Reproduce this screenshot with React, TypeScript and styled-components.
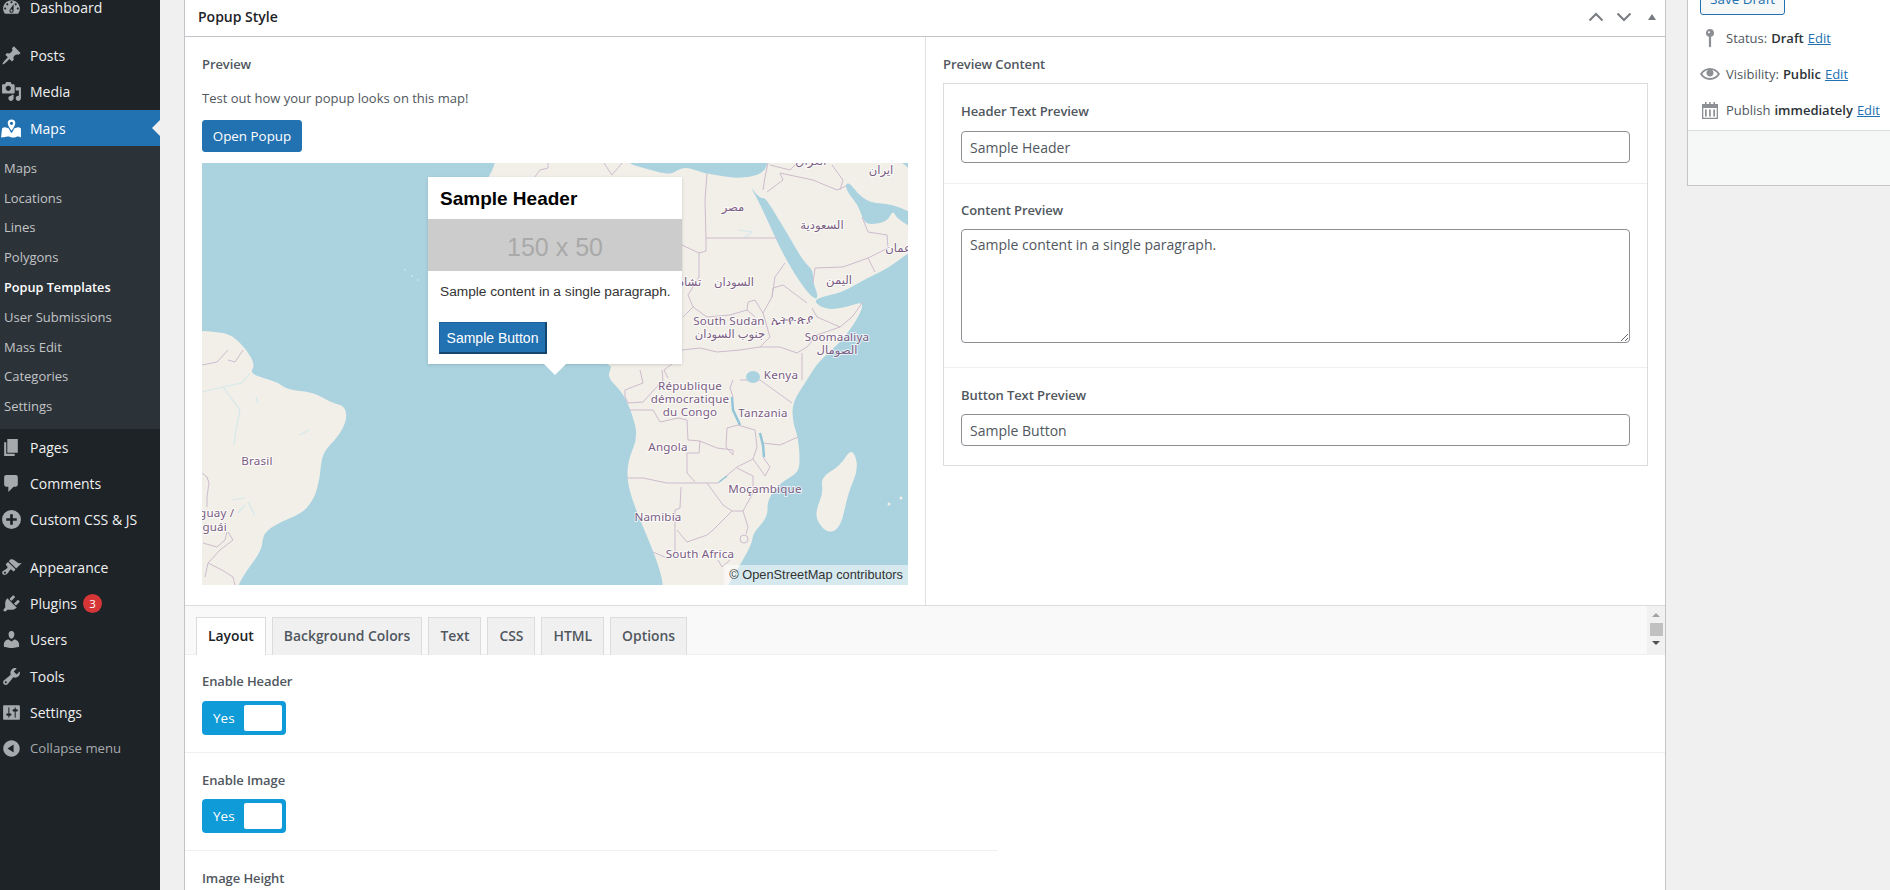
import React from 'react';
import styled, { createGlobalStyle } from 'styled-components';

const GlobalStyle = createGlobalStyle`
  html, body { margin: 0; padding: 0; background: #f0f0f1; overflow: hidden; }
  * { box-sizing: border-box; }
  body { font-family: "Open Sans", "Noto Sans", sans-serif; font-size: 14px; color: #50575e; }
`;

const ICONS: Record<string, string> = {
  dashboard:
    'M3.76 16h12.48c1.1-1.37 1.76-3.11 1.76-5 0-4.42-3.58-8-8-8s-8 3.58-8 8c0 1.89.66 3.63 1.76 5zM10 4c.55 0 1 .45 1 1s-.45 1-1 1-1-.45-1-1 .45-1 1-1zM6 6c.55 0 1 .45 1 1s-.45 1-1 1-1-.45-1-1 .45-1 1-1zm8 0c.55 0 1 .45 1 1s-.45 1-1 1-1-.45-1-1 .45-1 1-1zm-5.37 5.55L12 7v6c0 1.1-.9 2-2 2s-2-.9-2-2c0-.57.24-1.08.63-1.45zM4 10c.55 0 1 .45 1 1s-.45 1-1 1-1-.45-1-1 .45-1 1-1zm12 0c.55 0 1 .45 1 1s-.45 1-1 1-1-.45-1-1 .45-1 1-1zm-5 3c0-.55-.45-1-1-1s-1 .45-1 1 .45 1 1 1 1-.45 1-1z',
  post: 'M10.44 3.02l1.82-1.82 6.36 6.35-1.83 1.82c-1.05-.68-2.48-.57-3.41.36l-.75.75c-.92.93-1.04 2.35-.35 3.41l-1.83 1.82-2.41-2.41-2.8 2.79c-.42.42-3.38 2.71-3.8 2.29s1.86-3.39 2.28-3.81l2.79-2.79L4.1 9.36l1.83-1.82c1.05.69 2.48.57 3.4-.36l.75-.75c.93-.92 1.05-2.35.36-3.41z',
  media:
    'M13 11V4c0-.55-.45-1-1-1h-1.67L9 1H5L3.67 3H2c-.55 0-1 .45-1 1v7c0 .55.45 1 1 1h10c.55 0 1-.45 1-1zM7 4.5c1.38 0 2.5 1.12 2.5 2.5S8.38 9.5 7 9.5 4.5 8.38 4.5 7 5.62 4.5 7 4.5zM14 6h5v10.5c0 1.38-1.12 2.5-2.5 2.5S14 17.88 14 16.5s1.12-2.5 2.5-2.5c.17 0 .34.02.5.05V9h-3V6zm-4 8.05V13h2v3.5c0 1.38-1.12 2.5-2.5 2.5S7 17.88 7 16.5 8.12 14 9.5 14c.17 0 .34.02.5.05z',
  maps: 'M1 10c1.5-1.2 3-1.4 4.6-.6L7.5 10c.4 1.3 1.2 2.8 2.5 4.4 1.3-1.6 2.1-3.1 2.5-4.4l1.9-.6c1.6-.8 3.1-.6 4.6.6v8.5c-1.5-1-3-1.2-4.6-.5-1.7.7-3.5.8-5.4.1-1.9-.7-3.7-.6-5.4.1-.8.3-2.3.3-3.6.3zM10 1.5a3.6 3.6 0 0 1 3.6 3.6c0 1.8-1.7 4.7-3.6 7-1.9-2.3-3.6-5.2-3.6-7A3.6 3.6 0 0 1 10 1.5zm0 2.1a1.5 1.5 0 1 0 0 3 1.5 1.5 0 0 0 0-3z',
  page: 'M6 15V2h10v13H6zm-1 1h8v2H3V5h2v11z',
  comment: 'M5 2h9c1.1 0 2 .9 2 2v7c0 1.1-.9 2-2 2h-2l-5 5v-5H5c-1.1 0-2-.9-2-2V4c0-1.1.9-2 2-2z',
  plus: 'M10 1a9 9 0 1 0 0 18 9 9 0 0 0 0-18zm-1.3 4h2.6v3.7H15v2.6h-3.7V15H8.7v-3.7H5V8.7h3.7z',
  appearance:
    'M14.48 11.06L7.41 3.99l1.5-1.5c.5-.56 2.3-.47 3.51.32 1.21.8 1.43 1.28 2.91 2.1 1.18.64 2.45 1.26 4.45.85zm-.71.71L6.7 4.7 4.93 6.47c-.39.39-.39 1.02 0 1.41l1.06 1.06c.39.39.39 1.03 0 1.42-.6.6-1.43 1.11-2.21 1.69-.35.26-.7.53-1.01.84C1.43 13.23.4 14.97 1.8 16.37c1.4 1.41 3.15.38 4.49-.95.31-.31.58-.66.84-1.01.58-.78 1.09-1.61 1.69-2.21.39-.39 1.03-.39 1.42 0l1.06 1.06c.39.39 1.02.39 1.41 0zM3.06 15.77c-.39-.39-.39-1.02 0-1.41s1.02-.39 1.41 0 .39 1.02 0 1.41-1.02.39-1.41 0z',
  plugin:
    'M13.11 4.36L9.87 7.6 8 5.73l3.24-3.24c.35-.34 1.05-.2 1.56.32.52.51.66 1.21.31 1.55zm-8 1.77l.91-1.12 9.01 9.01-1.19.84c-.71.71-2.63 1.16-3.82 1.16H6.14L4.9 17.26c-.59.59-1.54.59-2.12 0-.59-.58-.59-1.53 0-2.12l1.24-1.24v-3.88c0-1.13.4-3.19 1.09-3.89zm7.26 3.97l3.24-3.24c.34-.35 1.04-.21 1.55.31.52.51.66 1.21.31 1.55l-3.24 3.25z',
  users:
    'M10 9.25c-2.27 0-2.73-3.44-2.73-3.44C7 4.02 7.82 2 9.97 2c2.16 0 2.98 2.02 2.71 3.81 0 0-.41 3.44-2.68 3.44zm0 2.57L12.72 10c2.39 0 4.52 2.33 4.52 4.53v2.49s-3.65 1.13-7.24 1.13c-3.65 0-7.24-1.13-7.24-1.13v-2.49c0-2.25 1.94-4.48 4.47-4.48z',
  tools:
    'M16.68 9.77c-1.34 1.34-3.3 1.67-4.95.99l-5.41 6.52c-.99.99-2.59.99-3.58 0s-.99-2.59 0-3.57l6.52-5.42c-.68-1.65-.35-3.61.99-4.95 1.28-1.28 3.12-1.62 4.72-1.06l-2.89 2.89 2.82 2.82 2.86-2.87c.53 1.58.18 3.39-1.08 4.65zM3.81 16.21c.4.39 1.04.39 1.43 0 .4-.4.4-1.04 0-1.43-.39-.4-1.03-.4-1.43 0-.39.39-.39 1.03 0 1.43z',
  settings:
    'M18 16V4c0-.55-.45-1-1-1H3c-.55 0-1 .45-1 1v12c0 .55.45 1 1 1h14c.55 0 1-.45 1-1zM8 11h1c.55 0 1 .45 1 1s-.45 1-1 1H8v1.5c0 .28-.22.5-.5.5s-.5-.22-.5-.5V13H6c-.55 0-1-.45-1-1s.45-1 1-1h1V5.5c0-.28.22-.5.5-.5s.5.22.5.5V11zm5-2h-1c-.55 0-1-.45-1-1s.45-1 1-1h1V5.5c0-.28.22-.5.5-.5s.5.22.5.5V7h1c.55 0 1 .45 1 1s-.45 1-1 1h-1v5.5c0 .28-.22.5-.5.5s-.5-.22-.5-.5V9z',
  collapse: 'M10 2.16c4.33 0 7.84 3.51 7.84 7.84s-3.51 7.84-7.84 7.84S2.16 14.33 2.16 10 5.71 2.16 10 2.16zm2 11.72V6.12L6.18 9.97z',
  pin: 'M10 1a4 4 0 0 1 1.1 7.85v9.65L10 19.5l-1.1-1V8.85A4 4 0 0 1 10 1zM9 3.2a1 1 0 1 0 0 2 1 1 0 0 0 0-2z',
  eye: 'M19.7 9.4C17.7 6 14 3.9 10 3.9S2.3 6 .3 9.4L0 10l.3.6c2 3.4 5.7 5.5 9.7 5.5s7.7-2.1 9.7-5.5l.3-.6-.3-.6zM10 14.1c-3.1 0-6-1.6-7.7-4.1C3.6 8 5.7 6.6 8 6.1c-.9.6-1.5 1.7-1.5 2.9 0 1.9 1.6 3.5 3.5 3.5s3.5-1.6 3.5-3.5c0-1.2-.6-2.3-1.5-2.9 2.3.5 4.4 1.9 5.7 3.9-1.7 2.5-4.6 4.1-7.7 4.1z',
  calendar:
    'M2 4h3V2h1.5v2h2.7V2h1.5v2h2.8V2H15v2h3v15H2zm1.3 4v9.7h13.4V8zM5 9.5h1.7v7H5zm4.1 0h1.7v7H9.1zm4.2 0H15v7h-1.7z',
};

const menuTop = [
  { icon: 'post', label: 'Posts' },
  { icon: 'media', label: 'Media' },
];
const subItems = ['Maps', 'Locations', 'Lines', 'Polygons', 'Popup Templates', 'User Submissions', 'Mass Edit', 'Categories', 'Settings'];
const menuMid = [
  { icon: 'page', label: 'Pages' },
  { icon: 'comment', label: 'Comments' },
  { icon: 'plus', label: 'Custom CSS & JS' },
];
const menuLow = [
  { icon: 'appearance', label: 'Appearance' },
  { icon: 'plugin', label: 'Plugins', badge: '3' },
  { icon: 'users', label: 'Users' },
  { icon: 'tools', label: 'Tools', offset: 1 },
  { icon: 'settings', label: 'Settings' },
];
const tabs = ['Layout', 'Background Colors', 'Text', 'CSS', 'HTML', 'Options'];

const Icon: React.FC<{ name: string; size?: number; className?: string }> = ({ name, size = 21, className }) => (
  <svg className={className} width={size} height={size} viewBox="0 0 20 20" fill="currentColor" fillRule="evenodd">
    <path d={ICONS[name]} />
  </svg>
);

// rounds a coast given as "x y x y ..." through the midpoints of its segments
const smooth = (points: string) => {
  const n = points.trim().split(/\s+/).map(Number);
  const pts: [number, number][] = [];
  for (let i = 0; i < n.length; i += 2) pts.push([n[i], n[i + 1]]);
  const mid = (a: [number, number], b: [number, number]) => `${(a[0] + b[0]) / 2} ${(a[1] + b[1]) / 2}`;
  let d = `M${mid(pts[pts.length - 1], pts[0])}`;
  pts.forEach((p, i) => {
    d += `Q${p[0]} ${p[1]} ${mid(p, pts[(i + 1) % pts.length])}`;
  });
  return d + 'Z';
};

// land and sea shapes, in page coordinates
const AFRICA = smooth(
  '497 150 627 150 627 163 643 168 670 175 677 170 687 167 703 173 717 175 733 178 750 177 763 173 768 163 768 150 920 150 920 248 908 253 890 267 870 277 860 282 843 292 817 298 815 303 827 310 847 307 865 301 857 320 840 343 818 362 807 380 792 403 793 423 798 437 800 460 798 473 780 483 767 500 768 517 753 533 752 543 743 560 725 590 725 600 663 600 663 585 660 570 650 543 637 513 627 483 628 460 638 437 632 413 623 393 608 378 610 370 612 365 560 345 470 300 430 250 492 177'
);
const RED_SEA = smooth(
  '750 186 758 200 771 228 781 250 794 273 807 292 816 300 818 295 813 283 813 270 804 262 791 240 781 223 765 197 762 199 756 194'
);
const GULF = smooth('845 184 850 183 857 193 870 203 893 204 920 217 920 232 897 219 893 210 887 222 867 225 862 217 858 205 848 193');
const MADAGASCAR = smooth('852 447 859 468 848 493 841 527 828 534 816 520 817 507 823 493 821 477 840 466');
const BRAZIL = smooth(
  '190 330 218 332 232 335 247 350 255 365 250 373 263 378 277 382 288 390 313 392 332 403 345 406 347 420 338 437 322 453 320 477 315 497 303 513 280 522 263 533 262 550 247 570 237 587 237 600 190 600'
);

const BORDERS = [
  '707 173 705 200 706 238 777 238',
  '682 245 699 253 706 251 706 238',
  '699 253 699 277 688 295 693 307 683 317',
  '693 307 707 317 730 315 747 310 755 317',
  '785 263 775 277 772 297 763 313 755 300 748 302 747 310',
  '682 350 700 348 717 352 740 350 760 347 770 337 763 313',
  '760 347 780 347 797 353 807 347 817 335 840 327',
  '802 353 802 380',
  '812 308 817 317 840 327 852 317 863 302',
  '807 303 783 285 773 288 772 297',
  '815 268 843 267 868 258 888 248 887 235 868 232 862 217',
  '815 268 813 283',
  '868 258 875 272',
  '768 163 765 177 763 190',
  '780 173 813 180 837 190 846 186',
  '780 173 783 180 767 192',
  '770 165 790 170 797 163',
  '832 165 843 180 840 190',
  '534 178 540 170 548 168 548 163',
  '604 163 612 175 622 163',
  '640 370 643 383 625 390 625 397 628 403 643 402 663 380 662 370',
  '672 364 664 370 668 378',
  '740 380 760 380 792 403',
  '733 380 730 388 733 397',
  '630 410 653 410 660 422 678 418 687 420 688 440 700 441 699 453 687 453 687 473 695 482',
  '700 441 717 448 733 450 733 455 726 447 727 428 738 425 755 430 757 447 753 459 737 467 718 483',
  '763 443 780 445 798 437',
  '627 478 643 478 667 483 697 483 718 483',
  '681 487 680 508 675 510 675 553',
  '707 483 723 505 732 511 713 530 707 535 687 542 677 530',
  '737 468 753 476 753 493 743 511 732 511',
  '743 511 748 527 746 534',
  '653 552 667 558',
  '763 457 770 467 765 476 761 470 753 459',
  '718 560 722 567 730 560',
  '202 473 207 477 209 483 207 497 207 507',
  '203 543 217 547 225 540 227 532',
  '228 532 233 540 220 550 208 563 205 577',
  '208 563 222 570 233 577 235 585',
  '202 365 217 362 228 350',
  '228 360 235 362 243 350',
];
const RIVERS = [
  '202 392 223 387 242 383 250 373',
  '223 387 240 410 236 430 234 445',
  '256 397 258 403',
  '300 435 309 430',
  '245 505 238 513',
  '248 502 255 515',
  '738 230 752 232 744 238',
  '232 500 245 498',
];
const LABELS: [number, number, string][] = [
  [811, 165, 'العراق'],
  [881, 174, 'ايران'],
  [733, 211, 'مصر'],
  [822, 229, 'السعودية'],
  [898, 252, 'عمان'],
  [734, 286, 'السودان'],
  [690, 286, 'تشاد'],
  [839, 284, 'اليمن'],
  [729, 325, 'South Sudan'],
  [730, 338, 'جنوب السودان'],
  [792, 324, 'ኢትዮጵያ'],
  [837, 341, 'Soomaaliya'],
  [837, 354, 'الصومال'],
  [781, 379, 'Kenya'],
  [690, 390, 'République'],
  [690, 403, 'démocratique'],
  [690, 416, 'du Congo'],
  [763, 417, 'Tanzania'],
  [668, 451, 'Angola'],
  [765, 493, 'Moçambique'],
  [658, 521, 'Namibia'],
  [700, 558, 'South Africa'],
  [257, 465, 'Brasil'],
  [204, 517, 'Paraguay /'],
  [202, 531, 'Paraguái'],
];

const MapDrawing: React.FC = () => (
  <MapSvg viewBox="202 163 706 422" width={706} height={422}>
    <rect x="202" y="163" width="706" height="422" fill="#aad3df" />
    <path d={AFRICA} fill="#f2efe9" />
    <path d={BRAZIL} fill="#f2efe9" />
    <path d={MADAGASCAR} fill="#f2efe9" />
    <path d={RED_SEA} fill="#aad3df" />
    <path d={GULF} fill="#aad3df" />
    {RIVERS.map((r) => (
      <polyline key={r} points={r} fill="none" stroke="#d5e8ea" strokeWidth="1.2" />
    ))}
    {BORDERS.map((b) => (
      <polyline key={b} points={b} fill="none" stroke="#cdbccd" strokeWidth="1" />
    ))}
    <ellipse cx="753" cy="377" rx="7" ry="6" fill="#aad3df" />
    <polyline points="732 397 733 410 740 425" fill="none" stroke="#93c5d8" strokeWidth="2.5" />
    <polyline points="760 433 763 445 764 457" fill="none" stroke="#93c5d8" strokeWidth="2.5" />
    <polyline points="719 482 727 476" fill="none" stroke="#93c5d8" strokeWidth="1.5" />
    <circle cx="744" cy="539" r="4" fill="none" stroke="#cdbccd" />
    <circle cx="889" cy="504" r="1.5" fill="#f2efe9" />
    <circle cx="901" cy="498" r="1.5" fill="#f2efe9" />
    <circle cx="405" cy="270" r="0.8" fill="#e4eef0" />
    <circle cx="412" cy="276" r="0.8" fill="#e4eef0" />
    <circle cx="418" cy="280" r="0.8" fill="#e4eef0" />
    {LABELS.map(([x, y, t]) => (
      <MapLabel key={t} x={x} y={y} textAnchor="middle">
        {t}
      </MapLabel>
    ))}
  </MapSvg>
);

const App: React.FC = () => (
  <Page>
    <GlobalStyle />
    <Sidebar>
      <MenuItem $offset={-11}>
        <MenuIcon name="dashboard" />
        Dashboard
      </MenuItem>
      <Separator />
      {menuTop.map((m) => (
        <MenuItem key={m.label}>
          <MenuIcon name={m.icon} />
          {m.label}
        </MenuItem>
      ))}
      <ActiveItem $offset={1}>
        <MenuIcon name="maps" />
        Maps
        <ActiveArrow />
      </ActiveItem>
      <SubMenu>
        {subItems.map((s) => (
          <SubItem key={s} $current={s === 'Popup Templates'}>
            {s}
          </SubItem>
        ))}
      </SubMenu>
      {menuMid.map((m) => (
        <MenuItem key={m.label}>
          <MenuIcon name={m.icon} />
          {m.label}
        </MenuItem>
      ))}
      <Separator />
      {menuLow.map((m) => (
        <MenuItem key={m.label} $offset={m.offset}>
          <MenuIcon name={m.icon} />
          {m.label}
          {m.badge && <Badge>{m.badge}</Badge>}
        </MenuItem>
      ))}
      <CollapseItem>
        <MenuIcon name="collapse" />
        Collapse menu
      </CollapseItem>
    </Sidebar>

    <Panel>
      <PanelHeader>
        <PanelTitle>Popup Style</PanelTitle>
        <HeaderActions>
          <svg width="16" height="10" viewBox="0 0 16 10" fill="none" stroke="#787c82" strokeWidth="2">
            <path d="M1.5 8.5L8 2l6.5 6.5" />
          </svg>
          <svg width="16" height="10" viewBox="0 0 16 10" fill="none" stroke="#787c82" strokeWidth="2">
            <path d="M1.5 1.5L8 8l6.5-6.5" />
          </svg>
          <CollapseCaret />
        </HeaderActions>
      </PanelHeader>

      <PreviewGrid>
        <PreviewColumn>
          <SectionLabel>Preview</SectionLabel>
          <HelpText>Test out how your popup looks on this map!</HelpText>
          <PrimaryButton>Open Popup</PrimaryButton>
          <MapFrame>
            <MapDrawing />
            <Popup>
              <PopupHeader>Sample Header</PopupHeader>
              <PopupImage>150 x 50</PopupImage>
              <PopupText>Sample content in a single paragraph.</PopupText>
              <PopupButton>Sample Button</PopupButton>
              <PopupTail />
            </Popup>
            <Attribution>© OpenStreetMap contributors</Attribution>
          </MapFrame>
        </PreviewColumn>
        <ContentColumn>
          <SectionLabel>Preview Content</SectionLabel>
          <ContentBox>
            <ContentRow $top={17} $bottom={20}>
              <SectionLabel>Header Text Preview</SectionLabel>
              <TextInput $gap={10} readOnly value="Sample Header" />
            </ContentRow>
            <ContentRow $top={16} $bottom={24}>
              <SectionLabel>Content Preview</SectionLabel>
              <TextArea readOnly value="Sample content in a single paragraph." />
            </ContentRow>
            <ContentRow $top={17} $bottom={19} $last>
              <SectionLabel>Button Text Preview</SectionLabel>
              <TextInput $gap={9} readOnly value="Sample Button" />
            </ContentRow>
          </ContentBox>
        </ContentColumn>
      </PreviewGrid>

      <TabBar>
        <TabList>
          {tabs.map((t) => (
            <Tab key={t} $active={t === 'Layout'}>
              {t}
            </Tab>
          ))}
        </TabList>
        <TabScroll>
          <ScrollUp />
          <ScrollThumb />
          <ScrollDown />
        </TabScroll>
      </TabBar>

      <OptionRow $top={16}>
        <SectionLabel>Enable Header</SectionLabel>
        <Toggle $gap={10}>
          Yes
          <ToggleKnob />
        </Toggle>
      </OptionRow>
      <OptionRow $top={17} $short>
        <SectionLabel>Enable Image</SectionLabel>
        <Toggle $gap={9}>
          Yes
          <ToggleKnob />
        </Toggle>
      </OptionRow>
      <OptionRow $top={17} $open>
        <SectionLabel>Image Height</SectionLabel>
      </OptionRow>
    </Panel>

    <SidePanel>
      <SideBody>
        <SaveDraft>Save Draft</SaveDraft>
        <SideRow>
          <SideIcon name="pin" />
          Status: <strong>Draft</strong> <a href="#status">Edit</a>
        </SideRow>
        <SideRow>
          <SideIcon name="eye" />
          Visibility: <strong>Public</strong> <a href="#visibility">Edit</a>
        </SideRow>
        <SideRow>
          <SideIcon name="calendar" />
          Publish <strong>immediately</strong> <a href="#publish">Edit</a>
        </SideRow>
      </SideBody>
      <SideFooter />
    </SidePanel>
  </Page>
);

export default App;

const Page = styled.div`
  display: flex;
  width: 1890px;
  height: 890px;
  overflow: hidden;
  align-items: flex-start;
`;

const Sidebar = styled.nav`
  flex: 0 0 160px;
  height: 890px;
  background: #1d2327;
  color: #f0f0f1;
`;

const MenuItem = styled.div<{ $offset?: number }>`
  display: flex;
  align-items: center;
  height: 36px;
  margin-top: ${(p) => p.$offset ?? 0}px;
  font-size: 14px;
  white-space: nowrap;
`;

const MenuIcon = styled(Icon)`
  flex: none;
  margin: 0 8px 0 1px;
  color: #a7aaad;
`;

const Separator = styled.div`
  height: 12px;
`;

const ActiveItem = styled(MenuItem)`
  position: relative;
  background: #2271b1;
  color: #fff;
  ${MenuIcon} {
    color: #fff;
  }
`;

const ActiveArrow = styled.span`
  position: absolute;
  right: 0;
  top: 10px;
  border: 8px solid transparent;
  border-right-color: #f0f0f1;
  border-left-width: 0;
`;

const SubMenu = styled.div`
  background: #2c3338;
  padding: 8px 0 8px 4px;
`;

const SubItem = styled.div<{ $current?: boolean }>`
  height: 29.6px;
  margin-top: ${(p) => (p.$current ? 1 : 0)}px;
  line-height: 29.6px;
  font-size: ${(p) => (p.$current ? 12.7 : 13)}px;
  white-space: nowrap;
  color: ${(p) => (p.$current ? '#fff' : '#c3c4c7')};
  font-weight: ${(p) => (p.$current ? 600 : 400)};
`;

const Badge = styled.span`
  display: inline-flex;
  align-items: center;
  justify-content: center;
  width: 19px;
  height: 19px;
  margin-left: 6px;
  border-radius: 50%;
  background: #d63638;
  color: #fff;
  font-size: 11.5px;
`;

const CollapseItem = styled(MenuItem)`
  color: #a7aaad;
  font-size: 13.2px;
`;

const Panel = styled.main`
  flex: 0 0 1482px;
  height: 890px;
  margin-left: 24px;
  background: #fff;
  border-left: 1px solid #c3c4c7;
  border-right: 1px solid #c3c4c7;
`;

const PanelHeader = styled.header`
  display: flex;
  align-items: center;
  justify-content: space-between;
  height: 37px;
  padding: 0 9px 3px 13px;
  border-bottom: 1px solid #c3c4c7;
`;

const PanelTitle = styled.h2`
  margin: 0;
  font-size: 14px;
  font-weight: 600;
  color: #1d2327;
`;

const HeaderActions = styled.div`
  display: flex;
  align-items: center;
  gap: 12px;
`;

const CollapseCaret = styled.span`
  margin-left: 4px;
  border: 4.5px solid transparent;
  border-top-width: 0;
  border-bottom: 6px solid #787c82;
`;

const PreviewGrid = styled.div`
  display: grid;
  grid-template-columns: 741px 1fr;
  height: 568px;
`;

const PreviewColumn = styled.section`
  padding: 17px 0 0 17px;
  border-right: 1px solid #e0e0e0;
`;

const ContentColumn = styled.section`
  padding: 17px 17px 0 17px;
`;

const SectionLabel = styled.div`
  height: 20px;
  line-height: 20px;
  font-size: 13px;
  font-weight: 600;
  letter-spacing: -0.1px;
  color: #50575e;
`;

const HelpText = styled.p`
  height: 20px;
  margin: 14px 0 12px;
  line-height: 20px;
  font-size: 13px;
`;

const PrimaryButton = styled.button`
  display: block;
  width: 100px;
  height: 32px;
  padding: 0;
  border: 1px solid #2271b1;
  border-radius: 3px;
  background: #2271b1;
  color: #fff;
  font: inherit;
  font-size: 13.4px;
`;

const MapFrame = styled.div`
  position: relative;
  width: 706px;
  height: 422px;
  margin-top: 11px;
  overflow: hidden;
`;

const MapSvg = styled.svg`
  display: block;
`;

const MapLabel = styled.text`
  font-family: "Noto Sans", "DejaVu Sans", sans-serif;
  font-size: 11.6px;
  letter-spacing: 0.2px;
  fill: #7b5c83;
  stroke: rgba(255, 255, 255, 0.7);
  stroke-width: 2px;
  paint-order: stroke;
`;

const Popup = styled.div`
  position: absolute;
  left: 226px;
  top: 14px;
  width: 254px;
  height: 187px;
  background: #fff;
  box-shadow: 0 1px 3px rgba(0, 0, 0, 0.15);
  font-family: "Liberation Sans", Arial, sans-serif;
`;

const PopupHeader = styled.div`
  display: flex;
  align-items: center;
  height: 42px;
  padding: 1px 0 0 12px;
  font-size: 19px;
  font-weight: 700;
  color: #000;
`;

const PopupImage = styled.div`
  display: flex;
  align-items: center;
  justify-content: center;
  height: 52px;
  padding-top: 4px;
  background: #ccc;
  color: #a9a9a9;
  font-size: 25px;
`;

const PopupText = styled.p`
  margin: 12px 0 0 12px;
  font-size: 13.7px;
  line-height: 18px;
  color: #333;
  white-space: nowrap;
`;

const PopupButton = styled.button`
  display: block;
  width: 108px;
  height: 32px;
  margin: 21px 0 0 11px;
  padding: 0;
  border: 1px solid #1d5f96;
  border-bottom: 2px solid #13466f;
  border-right: 2px solid #13466f;
  background: #2271b1;
  color: #fff;
  font-family: inherit;
  font-size: 14px;
`;

const PopupTail = styled.span`
  position: absolute;
  left: 116px;
  top: 187px;
  border: 11px solid transparent;
  border-bottom-width: 0;
  border-top-color: #fff;
`;

const Attribution = styled.div`
  position: absolute;
  right: 0;
  bottom: 0;
  height: 20px;
  padding: 0 5px;
  background: rgba(255, 255, 255, 0.5);
  font-family: "Liberation Sans", Arial, sans-serif;
  font-size: 12.8px;
  line-height: 20px;
  color: #333;
`;

const ContentBox = styled.div`
  margin-top: 9px;
  border: 1px solid #dcdcde;
  height: 383px;
`;

const ContentRow = styled.div<{ $top: number; $bottom: number; $last?: boolean }>`
  padding: ${(p) => p.$top}px 17px ${(p) => p.$bottom}px 17px;
  border-bottom: ${(p) => (p.$last ? 'none' : '1px solid #f0f0f1')};
`;

const TextInput = styled.input<{ $gap: number }>`
  display: block;
  width: 100%;
  height: 32px;
  margin-top: ${(p) => p.$gap}px;
  padding: 0 8px;
  border: 1px solid #8c8f94;
  border-radius: 4px;
  background: #fff;
  color: #50575e;
  font: inherit;
  font-size: 14px;
  outline: none;
`;

const TextArea = styled.textarea`
  display: block;
  width: 100%;
  height: 114px;
  margin-top: 9px;
  padding: 5px 8px;
  border: 1px solid #8c8f94;
  border-radius: 4px;
  color: #50575e;
  font: inherit;
  font-size: 14px;
  line-height: 20px;
  outline: none;
`;

const TabBar = styled.div`
  display: flex;
  justify-content: space-between;
  height: 50px;
  background: #f9f9f9;
  border-top: 1px solid #dcdcde;
  border-bottom: 1px solid #f0f0f1;
`;

const TabList = styled.div`
  display: flex;
  align-items: flex-end;
  gap: 6px;
  padding-left: 11px;
  margin-bottom: -1px;
`;

const Tab = styled.div<{ $active?: boolean }>`
  height: 38px;
  padding: 0 11px;
  line-height: 36px;
  border: 1px solid #dcdcde;
  border-bottom: none;
  background: ${(p) => (p.$active ? '#fff' : '#f0f0f1')};
  color: ${(p) => (p.$active ? '#1d2327' : '#50575e')};
  font-size: 13.9px;
  font-weight: 600;
`;

const TabScroll = styled.div`
  display: flex;
  flex-direction: column;
  align-items: center;
  width: 18px;
  background: #f1f1f1;
`;

const ScrollUp = styled.span`
  margin-top: 7px;
  border: 4px solid transparent;
  border-top-width: 0;
  border-bottom: 4px solid #a3a3a3;
`;

const ScrollThumb = styled.span`
  width: 13px;
  height: 13px;
  margin-top: 6px;
  background: #c1c1c1;
`;

const ScrollDown = styled.span`
  margin-top: 5px;
  border: 4px solid transparent;
  border-bottom-width: 0;
  border-top: 4px solid #505050;
`;

const OptionRow = styled.div<{ $top: number; $short?: boolean; $open?: boolean }>`
  width: ${(p) => (p.$short ? '813px' : 'auto')};
  padding: ${(p) => p.$top}px 17px 17px;
  border-bottom: ${(p) => (p.$open ? 'none' : '1px solid #f0f0f1')};
`;

const Toggle = styled.div<{ $gap: number }>`
  display: flex;
  align-items: center;
  justify-content: space-between;
  width: 84px;
  height: 34px;
  margin-top: ${(p) => p.$gap}px;
  padding: 4px 4px 4px 11px;
  border-radius: 4px;
  background: #0f9bd7;
  color: #fff;
  font-size: 13.5px;
`;

const ToggleKnob = styled.span`
  width: 38px;
  height: 26px;
  border-radius: 2px;
  background: #fff;
`;

const SidePanel = styled.aside`
  flex: 1;
  margin: -30px 0 0 21px;
  min-width: 0;
  background: #fff;
  border: 1px solid #c3c4c7;
  border-right: none;
`;

const SideBody = styled.div`
  padding: 11px 0 2px 12px;
`;

const SaveDraft = styled.button`
  display: block;
  width: 85px;
  height: 33px;
  margin-bottom: 5px;
  padding: 0;
  border: 1px solid #2271b1;
  border-radius: 3px;
  background: #f6f7f7;
  color: #2271b1;
  font: inherit;
  font-size: 13.5px;
`;

const SideRow = styled.div`
  display: flex;
  align-items: center;
  gap: 4px;
  height: 36px;
  font-size: 13px;
  white-space: nowrap;
  strong {
    font-weight: 600;
    color: #2c3338;
  }
  a {
    color: #2271b1;
  }
`;

const SideIcon = styled(Icon).attrs({ size: 20 })`
  flex: none;
  margin-right: 2px;
  color: #8c8f94;
`;

const SideFooter = styled.div`
  height: 55px;
  background: #f6f7f7;
  border-top: 1px solid #dcdcde;
`;
